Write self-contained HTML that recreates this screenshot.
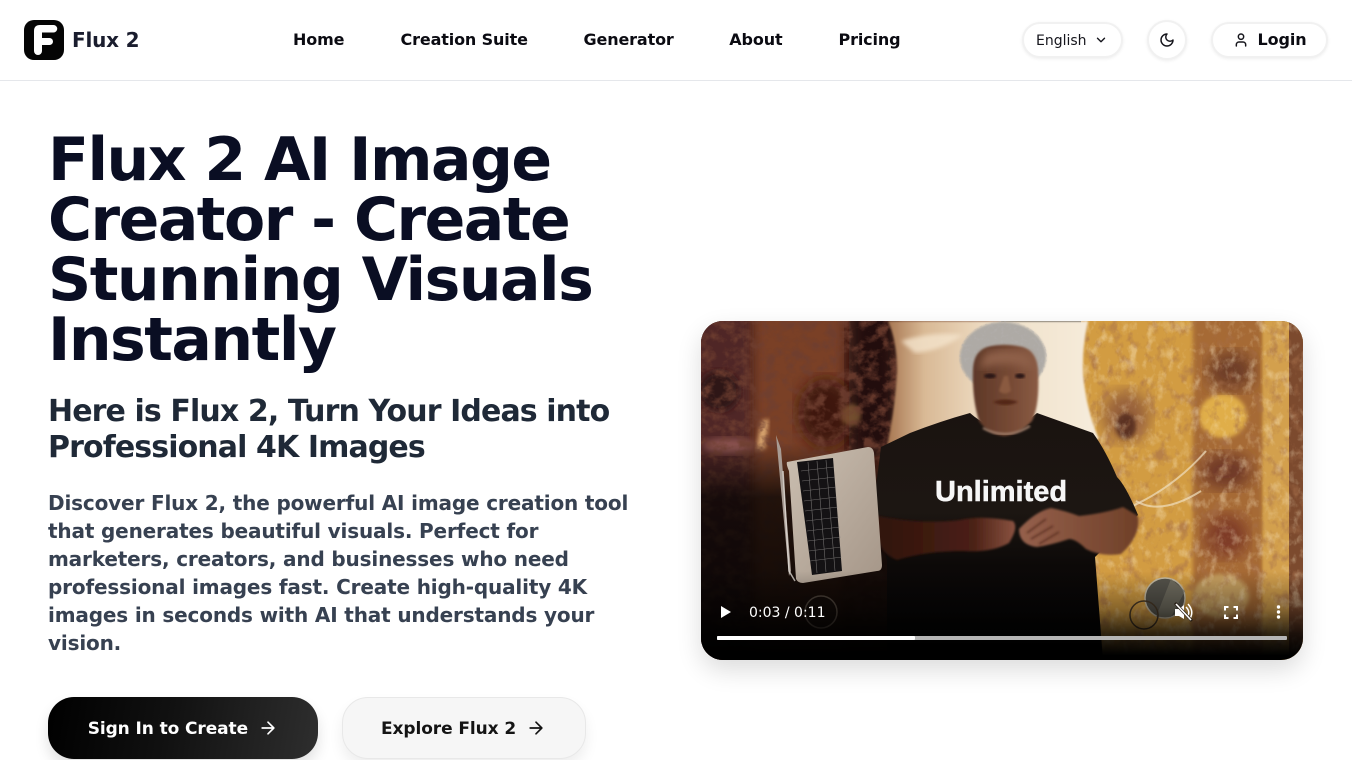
<!DOCTYPE html>
<html lang="en"><head><meta charset="utf-8"><title>Flux 2</title>
<style>
*{box-sizing:border-box;margin:0;padding:0}
html,body{width:1352px;height:760px;overflow:hidden;background:#fff;font-family:"DejaVu Sans",sans-serif}
.a{position:absolute;white-space:nowrap}
.nav{top:30px;font-size:16px;line-height:20px;font-weight:700;color:#0b0b12;letter-spacing:-.14px}
.pill{background:#fff;border:2px solid #f1f1f1;box-shadow:0 1px 3px rgba(0,0,0,.07)}
</style></head><body>
<div class="a" style="left:0;top:80px;width:1352px;height:1px;background:#e5e7eb"></div>
<svg class="a" style="left:24px;top:20px" width="40" height="40" viewBox="0 0 40 40"><rect width="40" height="40" rx="10" fill="#050505"/><path d="M10 31V11Q10 5 16 5H29.500A3.750 3.750 0 0 1 29.500 12.500H18V18H25.500A3.500 3.500 0 0 1 25.500 25H18V31A4 4 0 0 1 10 31Z" fill="#fff"/></svg>
<div class="a" style="left:72px;top:27px;font-size:20px;line-height:26px;font-weight:700;color:#1a1d2e;letter-spacing:-.2px">Flux 2</div>
<div class="a nav" style="left:293px">Home</div>
<div class="a nav" style="left:400.500px">Creation Suite</div>
<div class="a nav" style="left:583.500px">Generator</div>
<div class="a nav" style="left:729.300px">About</div>
<div class="a nav" style="left:838.500px">Pricing</div>

<div class="a pill" style="left:1022px;top:22px;width:101px;height:36px;border-radius:18px"></div>
<div class="a" style="left:1036px;top:32px;font-size:14px;line-height:18px;color:#15151c">English</div>
<svg class="a" style="left:1094px;top:33px" width="14" height="14" viewBox="0 0 24 24" fill="none" stroke="#15151c" stroke-width="2.400" stroke-linecap="round" stroke-linejoin="round"><path d="M6 9l6 6 6-6"/></svg>
<div class="a pill" style="left:1147px;top:20px;width:40px;height:40px;border-radius:20px"></div>
<svg class="a" style="left:1159px;top:32px" width="16" height="16" viewBox="0 0 24 24" fill="none" stroke="#15151c" stroke-width="2.200" stroke-linecap="round" stroke-linejoin="round"><path d="M12 3a6 6 0 0 0 9 9 9 9 0 1 1-9-9Z"/></svg>
<div class="a pill" style="left:1211px;top:22px;width:117px;height:36px;border-radius:18px"></div>
<svg class="a" style="left:1233px;top:32px" width="16" height="16" viewBox="0 0 24 24" fill="none" stroke="#15151c" stroke-width="2.200" stroke-linecap="round" stroke-linejoin="round"><circle cx="12" cy="7" r="4"/><path d="M19 21v-2a4 4 0 0 0-4-4H9a4 4 0 0 0-4 4v2"/></svg>
<div class="a" style="left:1257.500px;top:30px;font-size:16px;line-height:20px;font-weight:700;color:#0b0b12;letter-spacing:-.1px">Login</div>

<div class="a" style="left:48px;top:130px;font-size:60px;line-height:60px;font-weight:700;color:#0a0e23;letter-spacing:-1.500px">Flux 2 AI Image<br>Creator - Create<br>Stunning Visuals<br>Instantly</div>
<div class="a" style="left:48px;top:394px;font-size:30px;line-height:36px;font-weight:700;color:#1f2937;letter-spacing:-.9px">Here is Flux 2, Turn Your Ideas into<br>Professional 4K Images</div>
<div class="a" style="left:48px;top:489px;font-size:20px;line-height:28px;font-weight:700;color:#374151;letter-spacing:-.16px">Discover Flux 2, the powerful AI image creation tool<br>that generates beautiful visuals. Perfect for<br>marketers, creators, and businesses who need<br>professional images fast. Create high-quality 4K<br>images in seconds with AI that understands your<br>vision.</div>

<div class="a" style="left:48px;top:697px;width:270px;height:62px;border-radius:26px;background:linear-gradient(100deg,#000 0%,#111 45%,#2e2e2e 100%);box-shadow:0 8px 14px rgba(0,0,0,.12)"></div>
<div class="a" style="left:87.700px;top:718px;font-size:17px;line-height:22px;font-weight:700;color:#fff;letter-spacing:-.09px">Sign In to Create</div>
<svg class="a" style="left:258px;top:718px" width="20" height="20" viewBox="0 0 24 24" fill="none" stroke="#fff" stroke-width="2" stroke-linecap="round" stroke-linejoin="round"><path d="M5 12h14M12 5l7 7-7 7"/></svg>
<div class="a" style="left:342px;top:697px;width:244px;height:62px;border-radius:26px;background:#f6f6f6;border:1px solid #e8e8e8;box-shadow:0 8px 14px rgba(0,0,0,.07)"></div>
<div class="a" style="left:381px;top:718px;font-size:17px;line-height:22px;font-weight:700;color:#141414;letter-spacing:-.09px">Explore Flux 2</div>
<svg class="a" style="left:526px;top:718px" width="20" height="20" viewBox="0 0 24 24" fill="none" stroke="#141414" stroke-width="2" stroke-linecap="round" stroke-linejoin="round"><path d="M5 12h14M12 5l7 7-7 7"/></svg>

<div class="a" style="left:701px;top:321px;width:602px;height:339px;border-radius:22px;box-shadow:0 10px 25px rgba(0,0,0,.14);background:#000"></div>
<div class="a" style="left:701px;top:321px;width:602px;height:339px;border-radius:22px;overflow:hidden">
<svg width="602" height="339" viewBox="0 0 602 339" style="display:block">
<defs>
<filter id="b2"><feGaussianBlur stdDeviation="2"/></filter>
<filter id="b1"><feGaussianBlur stdDeviation="1"/></filter>
<filter id="b4"><feGaussianBlur stdDeviation="4"/></filter>
<filter id="b8"><feGaussianBlur stdDeviation="8"/></filter>
<filter id="n" x="0" y="0" width="100%" height="100%"><feTurbulence type="fractalNoise" baseFrequency="0.08 0.1" numOctaves="4" seed="7"/><feColorMatrix values="0 0 0 0 0.16  0 0 0 0 0.05  0 0 0 0 0.03  2.200 2.200 0 0 -1.950"/></filter>
<filter id="n3" x="0" y="0" width="100%" height="100%"><feTurbulence type="fractalNoise" baseFrequency="0.09 0.07" numOctaves="4" seed="12"/><feColorMatrix values="0 0 0 0 0.38  0 0 0 0 0.16  0 0 0 0 0.07  2.200 2.200 0 0 -2.250"/></filter>
<filter id="n2" x="0" y="0" width="100%" height="100%"><feTurbulence type="fractalNoise" baseFrequency="0.11 0.08" numOctaves="4" seed="21"/><feColorMatrix values="0 0 0 0 0.97  0 0 0 0 0.82  0 0 0 0 0.56  0 2 2 0 -2"/></filter>
<filter id="hn" x="0" y="0" width="100%" height="100%"><feTurbulence type="fractalNoise" baseFrequency="0.3" numOctaves="2" seed="4"/><feColorMatrix values="0 0 0 0 0.45  0 0 0 0 0.43  0 0 0 0 0.42  1.800 1.800 0 0 -1.700"/></filter>
<clipPath id="hc"><ellipse cx="302" cy="36" rx="44" ry="36"/></clipPath>
<clipPath id="rr"><rect x="380" width="222" height="339"/></clipPath>
<linearGradient id="pil" x1="0" x2="1"><stop offset="0" stop-color="#a5744f"/><stop offset=".18" stop-color="#d9b995"/><stop offset=".5" stop-color="#f0e0c8"/><stop offset="1" stop-color="#f6ecdc"/></linearGradient>
<linearGradient id="face" x1="0" x2="1"><stop offset="0" stop-color="#5e3828"/><stop offset=".55" stop-color="#754934"/><stop offset="1" stop-color="#8a5b44"/></linearGradient>
<linearGradient id="fade" x1="0" x2="0" y1="0" y2="1"><stop offset="0" stop-color="#000" stop-opacity="0"/><stop offset=".42" stop-color="#000" stop-opacity=".35"/><stop offset=".7" stop-color="#000" stop-opacity=".78"/><stop offset=".95" stop-color="#000"/></linearGradient>
<linearGradient id="lfade" x1="0" x2="0" y1="0" y2="1"><stop offset=".36" stop-color="#000" stop-opacity="0"/><stop offset=".52" stop-color="#000" stop-opacity=".72"/><stop offset="1" stop-color="#000" stop-opacity=".9"/></linearGradient>
<linearGradient id="arm" x1="0" x2="1"><stop offset="0" stop-color="#2e130c"/><stop offset=".7" stop-color="#4a2015"/><stop offset="1" stop-color="#8a5240"/></linearGradient>
<linearGradient id="arm2" x1="0" x2="1"><stop offset="0" stop-color="#95604c"/><stop offset="1" stop-color="#6f4028"/></linearGradient>
<linearGradient id="shirt" x1="0" x2="0" y1="0" y2="1"><stop offset="0" stop-color="#1a1310"/><stop offset=".4" stop-color="#1c1612"/><stop offset=".62" stop-color="#0c0908"/><stop offset="1" stop-color="#030303"/></linearGradient>
<linearGradient id="lap" x1="0" x2="1" y1="0" y2="1"><stop offset="0" stop-color="#cbbfb1"/><stop offset="1" stop-color="#a59688"/></linearGradient>
</defs>
<!-- rug left -->
<rect width="300" height="339" fill="#603021"/>
<rect x="-8" y="-8" width="56" height="355" fill="#4f2627" filter="url(#b4)"/>
<rect x="56" y="-8" width="84" height="355" fill="#7a4027" filter="url(#b4)"/>
<ellipse cx="125" cy="92" rx="28" ry="34" fill="#3d1710" filter="url(#b8)"/>
<rect x="148" y="-10" width="48" height="145" fill="#220c08" filter="url(#b8)"/>
<ellipse cx="18" cy="70" rx="20" ry="20" fill="#2e1214" filter="url(#b4)"/>
<ellipse cx="28" cy="125" rx="26" ry="8" fill="#8b5350" filter="url(#b4)"/>
<ellipse cx="150" cy="94" rx="10" ry="11" fill="#a87a44" filter="url(#b2)" opacity=".55"/>
<path d="M60 100L68 98L64 128L55 130Z" fill="#d8a46e" filter="url(#b2)"/>
<rect width="300" height="339" filter="url(#n)" opacity=".85"/>
<!-- rug right -->
<rect x="380" width="222" height="339" fill="#d29c42"/>
<rect x="492" y="-8" width="70" height="355" fill="#a66a36" filter="url(#b2)"/>
<rect x="562" width="26" height="339" fill="#d3a04e" filter="url(#b1)"/>
<rect x="588" width="14" height="339" fill="#7c4a2e"/>
<ellipse cx="425" cy="95" rx="24" ry="26" fill="#96603a" filter="url(#b8)"/>
<ellipse cx="425" cy="105" rx="10" ry="13" fill="#5c3320" filter="url(#b2)"/>
<ellipse cx="522" cy="95" rx="24" ry="22" fill="#e0ae4a" filter="url(#b2)"/>
<ellipse cx="530" cy="50" rx="24" ry="20" fill="#6e3c26" filter="url(#b8)"/>
<ellipse cx="525" cy="150" rx="26" ry="18" fill="#6e3826" filter="url(#b8)"/>
<ellipse cx="525" cy="215" rx="22" ry="22" fill="#7e3a26" filter="url(#b8)"/>
<ellipse cx="520" cy="275" rx="28" ry="22" fill="#c7a060" filter="url(#b2)"/>
<g clip-path="url(#rr)"><rect width="602" height="339" filter="url(#n3)" opacity=".6"/><rect width="602" height="339" filter="url(#n2)" opacity=".4"/></g>
<path d="M420 190Q470 170 505 130" stroke="#f0dfc0" stroke-width="2" fill="none" opacity=".7"/>
<path d="M435 180Q460 195 500 170" stroke="#f0dfc0" stroke-width="2" fill="none" opacity=".7"/>
<rect x="0" width="300" height="339" fill="url(#lfade)"/>
<!-- pillow -->
<path d="M187 0H387Q378 40 385 75Q390 100 398 118L320 130H185Q194 90 196 50Q196 20 187 0Z" fill="url(#pil)" filter="url(#b1)"/>
<path d="M200 20Q230 10 262 14Q240 30 214 32Z" fill="#f4e4cc" filter="url(#b2)" opacity=".8"/>
<!-- shirt -->
<path d="M269 92Q240 100 209 112L180 126Q176 160 171 189Q172 195 176 198L186 240V339H402L394 236L437 194Q425 165 416 156Q405 130 392 112L336 92Q303 122 269 92Z" fill="url(#shirt)"/>
<!-- hair + face -->
<ellipse cx="302" cy="36" rx="43" ry="35" fill="#aeaaa5" filter="url(#b1)"/>
<g clip-path="url(#hc)"><rect x="255" width="95" height="75" filter="url(#hn)" opacity=".7"/></g>
<path d="M272 48Q273 28 290 25Q304 22 322 26Q335 30 337 48Q339 84 331 100Q318 114 303 115Q288 114 278 100Q271 78 272 48Z" fill="url(#face)" filter="url(#b1)"/>
<path d="M284 33Q304 26 326 33Q332 40 332 48Q304 38 278 48Z" fill="#8f604a" filter="url(#b4)"/>
<ellipse cx="289" cy="55" rx="6" ry="2.500" fill="#2a1712" filter="url(#b1)"/><ellipse cx="319" cy="55" rx="5" ry="2.500" fill="#2a1712" filter="url(#b1)"/>
<path d="M303 55L298 70Q304 75 310 70L307 55Z" fill="#8a5a40" filter="url(#b1)"/>
<path d="M292 81Q304 76 317 81Q304 87 292 81Z" fill="#532519" filter="url(#b1)"/>
<path d="M282 107Q305 120 329 105" stroke="#a58470" stroke-width="2" fill="none" filter="url(#b1)"/>
<!-- arms -->
<path d="M172 194Q220 204 259 199Q280 194 312 200Q318 206 308 222Q290 232 262 230Q225 230 196 239Q178 232 176 212Z" fill="url(#arm)" filter="url(#b1)"/>
<path d="M318 208Q335 190 350 187Q365 190 378 195Q405 192 422 186L437 195Q440 215 420 233Q400 236 385 228Q375 218 368 218Q350 224 336 226Q318 224 318 208Z" fill="url(#arm2)" filter="url(#b1)"/>
<path d="M326 212L345 198M330 218L352 205M338 223L358 211" stroke="#50271a" stroke-width="1.500" filter="url(#b1)" opacity=".8"/>
<!-- laptop -->
<path d="M75 114L80 128L90 250L88 255Z" fill="#a89c94"/>
<path d="M86 141L167 126Q172 126 173 132L181 244Q181 250 176 250L102 262Q97 262 95 258L88 150Q85 143 86 141Z" fill="url(#lap)"/>
<path d="M96 141L132 137L141 250L111 254Z" fill="#141214"/>
<path d="M100 150L133 146M101 160L134 156M102 170L135 166M103 180L136 176M104 190L137 186M105 200L138 196M106 210L139 206M107 220L140 216M108 230L140 226M109 240L141 236M107 141L116 252M116 140L125 251M125 139L134 250" stroke="#8d8a88" stroke-width=".6" opacity=".75"/>
<path d="M82 150L88 250L94 260" stroke="#e1dcd6" stroke-width="1.500" fill="none" opacity=".8"/>
<!-- glasses -->
<circle cx="464" cy="277" r="20" fill="#56544c" stroke="#c6bca5" stroke-width="1.500"/>
<path d="M470 258L484 270L470 296L455 296Z" fill="#7c776a" opacity=".7"/>
<circle cx="443" cy="294" r="14" fill="none" stroke="#4a3a28" stroke-width="1.500"/>
<circle cx="120" cy="291" r="16" fill="#120b08" stroke="#4a4038" stroke-width="1.500"/>
<!-- fade -->
<rect y="250" width="602" height="89" fill="url(#fade)"/>
<text x="234" y="180" font-family="Liberation Sans,Arial,sans-serif" font-size="29" font-weight="700" fill="#f6f6f6" stroke="#f6f6f6" stroke-width=".5">Unlimited</text>
<!-- controls -->
<path d="M20 285V297L30 291Z" fill="#fff"/>
<text x="48" y="296" font-family="DejaVu Sans,sans-serif" font-size="14" fill="#fff">0:03 / 0:11</text>
<path d="M474 288H478L483 284V298L478 295H474Z" fill="#fff"/>
<path d="M485 286Q490 291 486 296" stroke="#fff" stroke-width="1.500" fill="none"/>
<path d="M487 283Q494 291 488 299" stroke="#fff" stroke-width="1.500" fill="none"/>
<path d="M474 282L491 300" stroke="#2a2118" stroke-width="3"/>
<path d="M475 283L490 299" stroke="#fff" stroke-width="1.600"/>
<path d="M524 289.500V286H527.500M532.500 286H536V289.500M536 293.500V297H532.500M527.500 297H524V293.500" stroke="#fff" stroke-width="2" fill="none"/>
<circle cx="577.500" cy="286" r="1.700" fill="#fff"/><circle cx="577.500" cy="291" r="1.700" fill="#fff"/><circle cx="577.500" cy="296" r="1.700" fill="#fff"/>
<rect x="16" y="315" width="570" height="4" rx="1" fill="#b5b5b5"/>
<rect x="16" y="315" width="198" height="4" rx="1" fill="#fff"/>
</svg>
</div>
</body></html>
